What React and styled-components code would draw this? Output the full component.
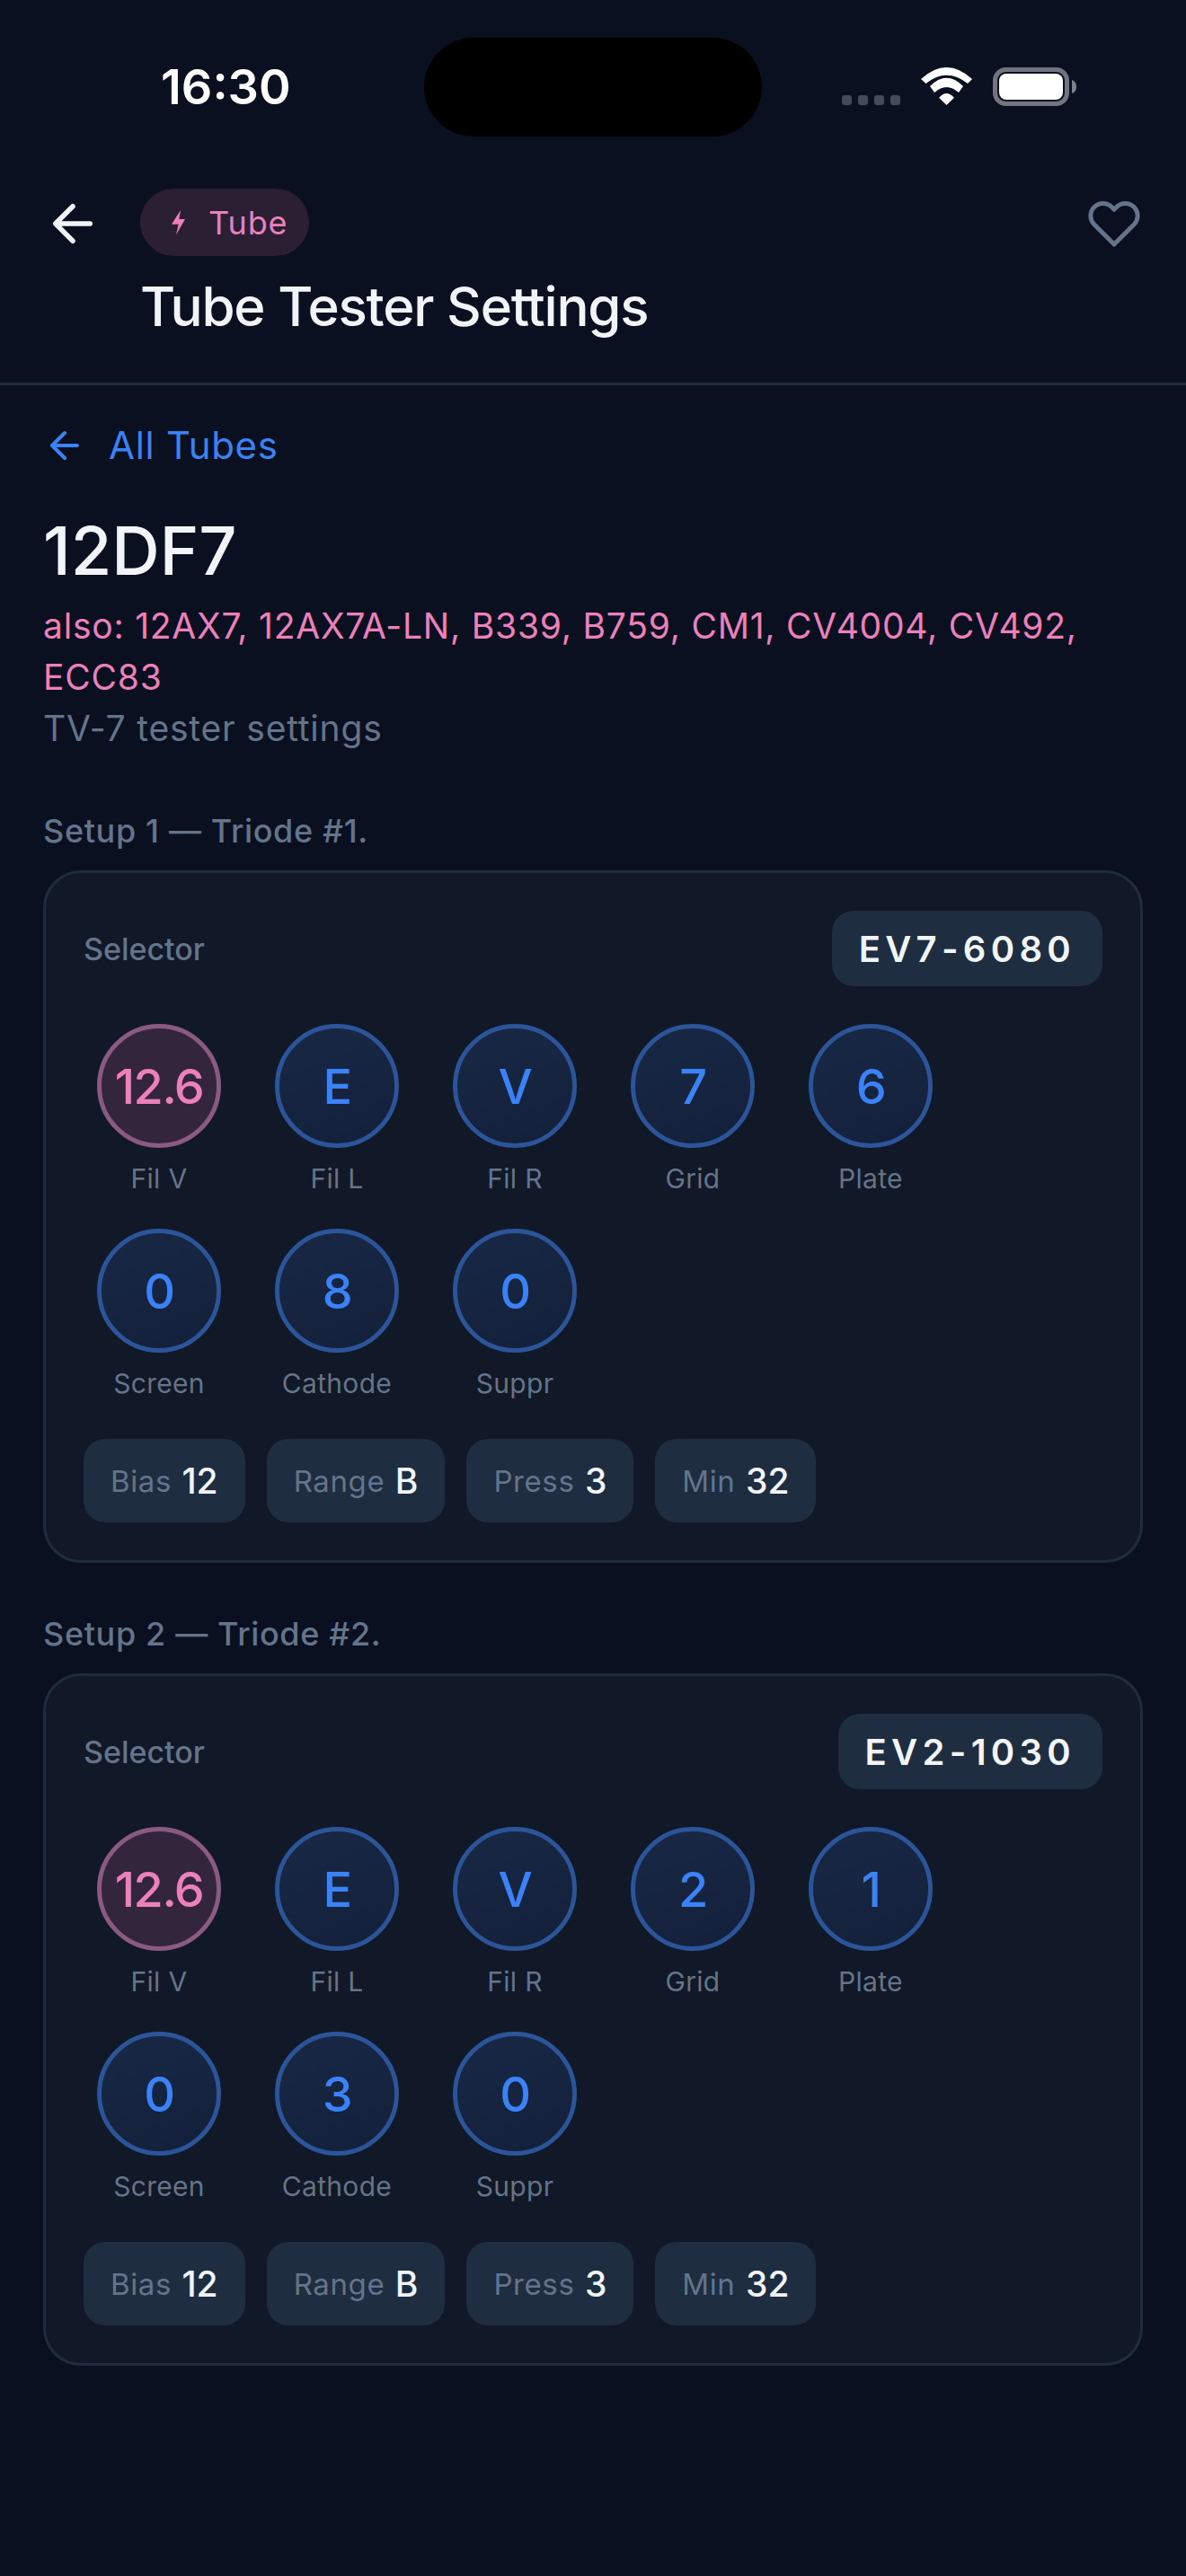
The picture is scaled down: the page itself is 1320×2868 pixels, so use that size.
import React from 'react';
import styled, { createGlobalStyle } from 'styled-components';

const Global = createGlobalStyle`
  html, body { margin: 0; padding: 0; background: #0a1020; }
  body { font-family: Inter, "Liberation Sans", sans-serif; }
`;

const Page = styled.div`
  width: 1320px;
  height: 2868px;
  background: #0a1020;
  overflow: hidden;
`;

const StatusBar = styled.div`
  position: relative;
  height: 192px;
  display: flex;
  justify-content: space-between;
  padding: 70px 122px 0 179px;
  box-sizing: border-box;
`;

const Time = styled.div`
  color: #fff;
  font-size: 54px;
  font-weight: 600;
  line-height: 54px;
`;

const Island = styled.div`
  position: absolute;
  left: 472px;
  top: 42px;
  width: 376px;
  height: 110px;
  background: #000;
  border-radius: 55px;
`;

const StatusIcons = styled.div`
  display: flex;
  align-items: flex-end;
  gap: 23px;
  height: 43px;
  margin-top: 5px;
`;

const Header = styled.div`
  height: 237px;
  box-sizing: border-box;
  border-bottom: 3px solid #1e2d3d;
  display: flex;
  padding: 18px 50px 0 48px;
`;

const BackIcon = styled.svg`
  margin-top: 6px;
`;

const HeartIcon = styled.svg`
  margin-top: 9px;
`;

const HeaderMain = styled.div`
  flex: 1;
  padding-left: 42px;
`;

const Badge = styled.div`
  display: inline-flex;
  align-items: center;
  gap: 26px;
  height: 75px;
  padding: 0 23px 0 35px;
  border-radius: 38px;
  background: #2a1f33;
  color: #ec80ba;
  font-size: 36px;
  letter-spacing: 0.9px;
`;

const Title = styled.div`
  color: #f1f5f9;
  font-size: 60px;
  font-weight: 500;
  letter-spacing: -1.2px;
  line-height: 72px;
  margin-top: 20px;
`;

const Body = styled.div`
  padding: 0 48px;
`;

const BackLink = styled.div`
  display: flex;
  align-items: center;
  gap: 25px;
  color: #3b82f6;
  font-size: 42px;
  letter-spacing: 0.7px;
  line-height: 63px;
  margin-top: 35px;
`;

const TubeName = styled.div`
  color: #f1f5f9;
  font-size: 74px;
  font-weight: 500;
  line-height: 86px;
  margin-top: 43px;
`;

const Also = styled.div`
  color: #ec80ba;
  font-size: 39px;
  letter-spacing: 0.77px;
  line-height: 57px;
  margin-top: 12px;
`;

const Sub = styled.div`
  color: #64748b;
  font-size: 39px;
  letter-spacing: 0.8px;
  line-height: 57px;
`;

const SetupLabel = styled.div`
  color: #64748b;
  font-size: 36px;
  font-weight: 500;
  letter-spacing: 0.65px;
  line-height: 54px;
  margin-top: ${p => p.$top}px;
`;

const Card = styled.div`
  margin-top: 17px;
  box-sizing: border-box;
  background: #111827;
  border: 3px solid #1e2d3d;
  border-radius: 42px;
  padding: 42px;
`;

const CardTop = styled.div`
  display: flex;
  justify-content: space-between;
  align-items: center;
`;

const SelectorLabel = styled.div`
  color: #64748b;
  font-size: 34px;
  font-weight: 500;
`;

const SelectorValue = styled.div`
  background: #1e2d40;
  color: #f1f5f9;
  font-size: 40px;
  font-weight: 600;
  letter-spacing: 5.3px;
  height: 84px;
  padding: 0 30px;
  border-radius: 24px;
  display: flex;
  align-items: center;
`;

const PinGrid = styled.div`
  display: grid;
  grid-template-columns: repeat(5, 168px);
  column-gap: 30px;
  row-gap: 33px;
  margin-top: 42px;
`;

const Pin = styled.div`
  display: flex;
  flex-direction: column;
  align-items: center;
  gap: 12px;
`;

const Circle = styled.div`
  width: 138px;
  height: 138px;
  box-sizing: border-box;
  border-radius: 50%;
  display: flex;
  align-items: center;
  justify-content: center;
  font-size: 54px;
  font-weight: 500;
  letter-spacing: -1.5px;
  color: ${p => (p.$pink ? '#ec80ba' : '#3b82f6')};
  border: 5px solid ${p => (p.$pink ? '#8a5a82' : '#2c5599')};
  background: ${p => (p.$pink ? '#33263c' : 'linear-gradient(160deg, #182845, #13203a)')};
`;

const PinLabel = styled.div`
  color: #64748b;
  font-size: 30px;
  letter-spacing: 0.3px;
  line-height: 45px;
`;

const Chips = styled.div`
  display: flex;
  gap: 24px;
  margin-top: 39px;
`;

const Chip = styled.div`
  display: flex;
  align-items: center;
  gap: 11.5px;
  height: 93px;
  padding: 0 30px;
  background: #1e2d40;
  border-radius: 24px;
  color: #64748b;
  font-size: 33px;
  letter-spacing: 0.6px;
`;

const ChipValue = styled.span`
  color: #f1f5f9;
  font-size: 39px;
  font-weight: 500;
  letter-spacing: 0;
`;

const setups = [
  { label: 'Setup 1 — Triode #1.', selector: 'EV7-6080', top: 59, pins: ['12.6', 'E', 'V', '7', '6', '0', '8', '0'] },
  { label: 'Setup 2 — Triode #2.', selector: 'EV2-1030', top: 52, pins: ['12.6', 'E', 'V', '2', '1', '0', '3', '0'] },
];

const pinLabels = ['Fil V', 'Fil L', 'Fil R', 'Grid', 'Plate', 'Screen', 'Cathode', 'Suppr'];

const chips = [['Bias', '12'], ['Range', 'B'], ['Press', '3'], ['Min', '32']];

const App = () => (
  <Page>
    <Global />
    <StatusBar>
      <Time>16:30</Time>
      <Island />
      <StatusIcons>
        <svg width="65" height="12" viewBox="0 0 65 12" fill="#454a58">
          <rect x="0" y="0" width="11" height="11" rx="3" />
          <rect x="18" y="0" width="11" height="11" rx="3" />
          <rect x="36" y="0" width="11" height="11" rx="3" />
          <rect x="54" y="0" width="11" height="11" rx="3" />
        </svg>
        <svg width="57" height="43" viewBox="0 0 57 43" fill="#fff">
          <path d="M0 13Q28.500-13 57 13L52 18Q28.500-.6 5.500 18Z" />
          <path d="M10 21Q28.500 2.400 47 21L42 28Q28.500 16 15 28Z" />
          <path d="M20 33.700Q28.500 24.300 37 33.700L28.500 42Z" />
        </svg>
        <svg width="93" height="43" viewBox="0 0 93 43" fill="none">
          <rect x="2.500" y="2.500" width="80" height="38" rx="12" stroke="#72757f" strokeWidth="5" />
          <rect x="7" y="7" width="71" height="29" rx="8" fill="#fff" />
          <path d="M88 14c3 .8 5 3.500 5 7.500s-2 6.700-5 7.500z" fill="#7d808a" />
        </svg>
      </StatusIcons>
    </StatusBar>
    <Header>
      <BackIcon width="66" height="66" viewBox="0 0 24 24" fill="none" stroke="#f1f5f9" strokeWidth="2" strokeLinecap="round" strokeLinejoin="round">
        <path d="M19 12H5M12 19l-7-7 7-7" />
      </BackIcon>
      <HeaderMain>
        <Badge>
          <svg width="15" height="28" viewBox="0 0 15 28" fill="#ec80ba">
            <path d="M10 0 0 15.700h7.700L5 27.300 15 10H8.300z" />
          </svg>
          Tube
        </Badge>
        <Title>Tube Tester Settings</Title>
      </HeaderMain>
      <HeartIcon width="60" height="60" viewBox="0 0 24 24" fill="none" stroke="#64748b" strokeWidth="2" strokeLinecap="round" strokeLinejoin="round">
        <path d="M20.840 4.610a5.500 5.500 0 0 0-7.780 0L12 5.670l-1.060-1.060a5.500 5.500 0 0 0-7.780 7.780L12 21.230l8.840-8.840a5.500 5.500 0 0 0 0-7.780z" />
      </HeartIcon>
    </Header>
    <Body>
      <BackLink>
        <svg width="48" height="48" viewBox="0 0 24 24" fill="none" stroke="#3b82f6" strokeWidth="2" strokeLinecap="round" strokeLinejoin="round">
          <path d="M19 12H5M12 19l-7-7 7-7" />
        </svg>
        All Tubes
      </BackLink>
      <TubeName>12DF7</TubeName>
      <Also>also: 12AX7, 12AX7A-LN, B339, B759, CM1, CV4004, CV492, ECC83</Also>
      <Sub>TV-7 tester settings</Sub>
      {setups.map(setup => (
        <div key={setup.label}>
          <SetupLabel $top={setup.top}>{setup.label}</SetupLabel>
          <Card>
            <CardTop>
              <SelectorLabel>Selector</SelectorLabel>
              <SelectorValue>{setup.selector}</SelectorValue>
            </CardTop>
            <PinGrid>
              {setup.pins.map((pin, i) => (
                <Pin key={pinLabels[i]}>
                  <Circle $pink={i === 0}>{pin}</Circle>
                  <PinLabel>{pinLabels[i]}</PinLabel>
                </Pin>
              ))}
            </PinGrid>
            <Chips>
              {chips.map(([name, value]) => (
                <Chip key={name}>
                  {name}
                  <ChipValue>{value}</ChipValue>
                </Chip>
              ))}
            </Chips>
          </Card>
        </div>
      ))}
    </Body>
  </Page>
);

export default App;
